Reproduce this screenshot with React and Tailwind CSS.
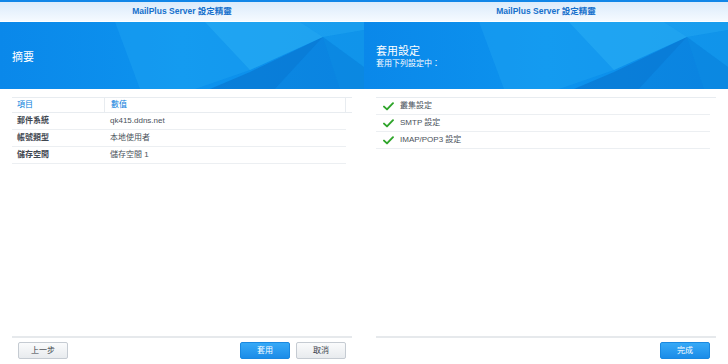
import React from 'react';

const FONT = { fontFamily: '"Liberation Sans", "Noto Sans CJK TC", sans-serif' };

// Banner artwork – faceted blue polygons
const BannerArt = () => (
    <svg className="absolute inset-0" width="364" height="67" viewBox="0 0 364 67" preserveAspectRatio="none">
        <defs>
            <linearGradient id="bg" x1="0" y1="0" x2="1" y2="0">
                <stop offset="0" stopColor="#0a88ea" />
                <stop offset="0.5" stopColor="#0d93ee" />
                <stop offset="1" stopColor="#0b8ce8" />
            </linearGradient>
        </defs>
        <rect width="364" height="67" fill="url(#bg)" />
        <polygon points="115,0 364,0 364,8 323,15 250,48 195,67 140,67" fill="#2bb2f6" opacity="0.25" />
        <polygon points="205,0 300,0 323,15 250,48" fill="#3cc0f8" opacity="0.3" />
        <polygon points="300,0 364,0 364,8 323,15" fill="#21a6f2" opacity="0.45" />
        <polygon points="210,67 250,50 323,15 275,67" fill="#0668c4" opacity="0.45" />
        <polygon points="275,67 323,15 340,67" fill="#0a78d4" opacity="0.4" />
        <polygon points="323,15 364,8 364,45" fill="#1aa0ee" opacity="0.4" />
        <polygon points="323,15 364,45 364,67 340,67" fill="#0b82da" opacity="0.45" />
    </svg>
);

const Check = () => (
    <svg width="11" height="9" viewBox="0 0 11 9">
        <path d="M1 4.6 L4 7.4 L10 1.2" fill="none" stroke="#2fa52a" strokeWidth="1.9" strokeLinecap="round" strokeLinejoin="round" />
    </svg>
);

const Button = ({ children, primary }) => (
    <button
        className={`w-[50px] h-[17px] rounded-[2px] border text-[8px] leading-none ${
            primary
                ? 'bg-gradient-to-b from-[#36a9f7] to-[#1b8ce8] border-[#1a88e0] text-white'
                : 'bg-gradient-to-b from-[#fafbfc] to-[#e8ebee] border-[#c5cbd2] text-[#3a4148]'
        }`}
    >
        {children}
    </button>
);

const Panel = ({ title, subtitle, children, footer }) => (
    <div className="w-[364px] h-[364px] flex flex-col bg-white">
        {/* Title bar */}
        <div className="h-[22px] border-t-2 border-[#1186e8] bg-gradient-to-b from-[#dbebfb] to-[#f5faff] border-b border-b-white flex items-center justify-center">
            <span className="text-[8.5px] font-bold text-[#1570cc]">MailPlus Server 設定精靈</span>
        </div>

        {/* Banner */}
        <div className="relative h-[67px] flex flex-col justify-center px-3 pt-[3px] text-white">
            <BannerArt />
            <div className="relative text-[11px] leading-[13px]">{title}</div>
            {subtitle && <div className="relative text-[8px] leading-[11px]">{subtitle}</div>}
        </div>

        {/* Content */}
        <div className="flex-1 px-3 pt-2">{children}</div>

        {/* Footer */}
        <div className="mx-3 border-t-2 border-[#e6e9ec] h-[28px] flex items-center px-[6px] pb-[5px] pt-[4px]">
            {footer}
        </div>
    </div>
);

const summaryRows = [
    { label: '郵件系統', value: 'qk415.ddns.net' },
    { label: '帳號類型', value: '本地使用者' },
    { label: '儲存空間', value: '儲存空間 1' },
];

const steps = ['叢集設定', 'SMTP 設定', 'IMAP/POP3 設定'];

export default function App() {
    return (
        <div className="flex w-[728px] h-[364px] overflow-hidden" style={FONT}>
            <Panel
                title="摘要"
                footer={
                    <>
                        <Button>上一步</Button>
                        <div className="flex-1" />
                        <div className="flex gap-[6px]">
                            <Button primary>套用</Button>
                            <Button>取消</Button>
                        </div>
                    </>
                }
            >
                <div className="text-[8px]">
                    <div className="flex h-[16px] border-t border-b border-[#e8ecf0] text-[#0a80dc]">
                        <div className="w-[92px] pl-[5px] flex items-center">項目</div>
                        <div className="w-[242px] pl-[6px] flex items-center border-l border-r border-[#e8ecf0]">數值</div>
                        <div className="flex-1" />
                    </div>
                    {summaryRows.map((row) => (
                        <div key={row.label} className="flex h-[17px] border-b border-[#eceff2] w-[334px]">
                            <div className="w-[92px] pl-[5px] flex items-center font-bold text-[#3f4750]">{row.label}</div>
                            <div className="flex-1 pl-[6px] flex items-center text-[#4a525a]">{row.value}</div>
                        </div>
                    ))}
                </div>
            </Panel>

            <Panel
                title="套用設定"
                subtitle="套用下列設定中："
                footer={
                    <>
                        <div className="flex-1" />
                        <Button primary>完成</Button>
                    </>
                }
            >
                <div className="text-[8px] border-t border-[#e8ecf0]">
                    {steps.map((s) => (
                        <div key={s} className="flex items-center h-[17px] border-b border-[#eceff2] w-[334px]">
                            <div className="w-[24px] pl-[7px] flex items-center"><Check /></div>
                            <span className="text-[#4a525a]">{s}</span>
                        </div>
                    ))}
                </div>
            </Panel>
        </div>
    );
}
